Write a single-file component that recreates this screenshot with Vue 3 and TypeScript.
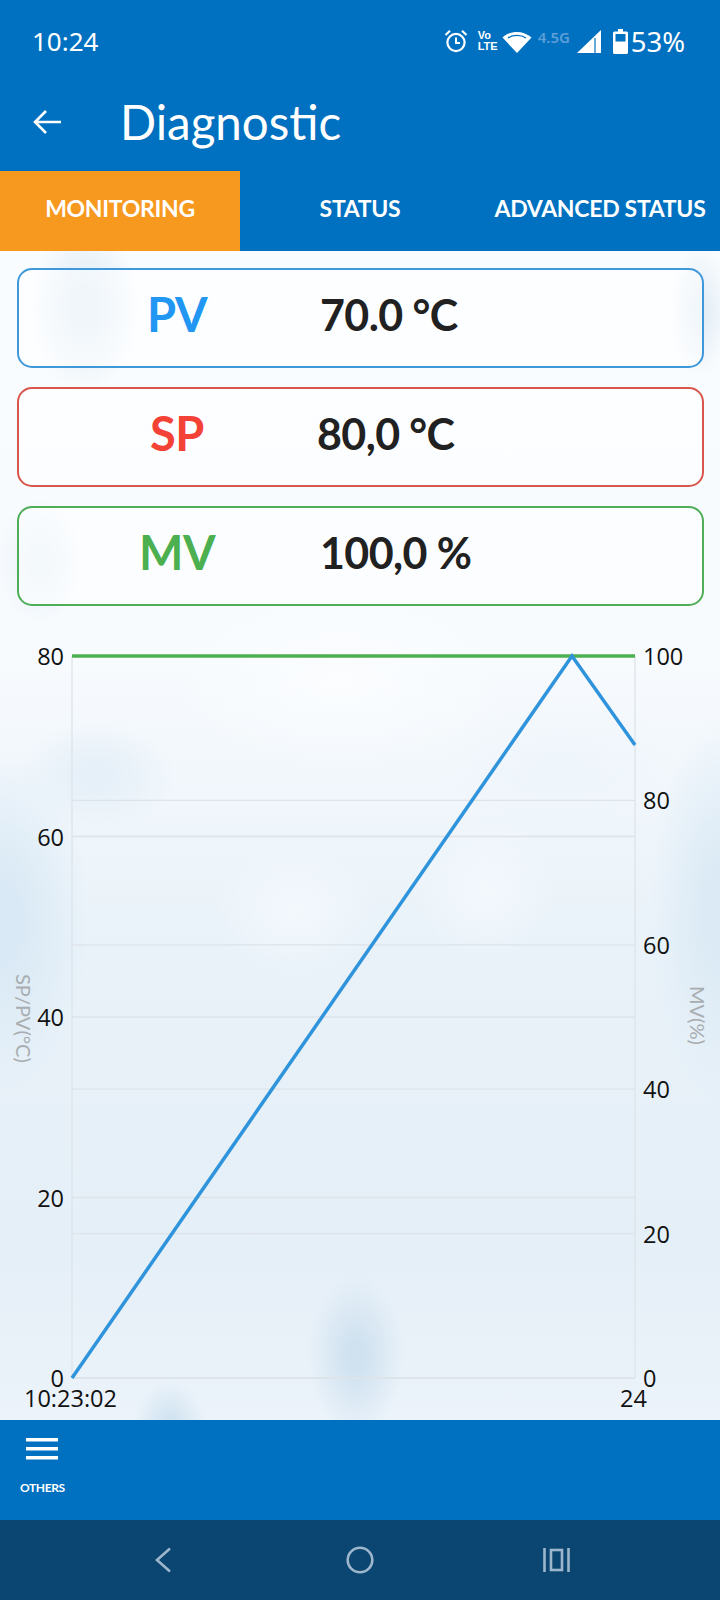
<script setup lang="ts">
interface Reading {
  key: string;
  value: string;
  tone: string;
  gap: number;
}

const readings: Reading[] = [
  { key: "PV", value: "70.0 °C", tone: "pv", gap: 2 },
  { key: "SP", value: "80,0 °C", tone: "sp", gap: -1 },
  { key: "MV", value: "100,0 %", tone: "mv", gap: 2 },
];

const tabs = ["MONITORING", "STATUS", "ADVANCED STATUS"];

const chartTop = 656;
const chartBottom = 1378;
const chartLeft = 72;
const chartRight = 635;
const span = chartBottom - chartTop;

const leftTicks = [80, 60, 40, 20, 0].map((v) => ({ v, y: chartBottom - (v / 80) * span }));
const rightTicks = [100, 80, 60, 40, 20, 0].map((v) => ({ v, y: chartBottom - (v / 100) * span }));
</script>

<template>
  <div class="screen">
    <header class="statusbar">
      <span class="clock">10:24</span>
      <div class="status-icons">
        <svg class="alarm" width="24" height="24" viewBox="0 0 24 24" fill="none" stroke="#fff" stroke-width="2.2">
          <circle cx="12" cy="13.5" r="8.6" />
          <path d="M12 8.5v5.5h4" stroke-width="2" />
          <path d="M1.5 6 6 1.8M22.5 6 18 1.8" />
        </svg>
        <span class="volte"><span>Vo</span><span>LTE</span></span>
        <svg class="wifi" width="30" height="23" viewBox="0 0 30 23">
          <path d="M15 23 0.5 7.5C8.5 0 21.500 0 29.500 7.500Z" fill="#fff" />
          <path d="M6 8C11 4.500 19 4.500 24 8" fill="none" stroke="#0070c0" stroke-width="1.400" />
        </svg>
        <span class="net">4.5G</span>
        <svg class="signal" width="24" height="23" viewBox="0 0 24 23">
          <path d="M0 23 24 0v23Z" fill="#fff" />
          <path d="M18 8v15" stroke="#0070c0" stroke-width="1.200" />
        </svg>
        <svg class="battery" width="15" height="25" viewBox="0 0 15 25">
          <path d="M5 0h5v2.500h3.500a1.500 1.500 0 0 1 1.500 1.500v19.500a1.500 1.500 0 0 1-1.500 1.500h-12A1.500 1.500 0 0 1 0 23.500V4a1.500 1.500 0 0 1 1.500-1.500H5Z" fill="#fff" />
          <rect x="2.500" y="5" width="10" height="7.500" fill="#0070c0" />
        </svg>
        <span class="percent">53%</span>
      </div>
    </header>

    <div class="toolbar">
      <svg class="back" width="28" height="28" viewBox="0 0 28 28" fill="none" stroke="#fff" stroke-width="2.600">
        <path d="M28 14H2M13 3 2 14l11 11" />
      </svg>
      <h1 class="title">Diagnostic</h1>
    </div>

    <nav class="tabs">
      <button v-for="(tab, i) in tabs" :key="tab" class="tab" :class="{ active: i === 0 }">{{ tab }}</button>
    </nav>

    <main class="content">
      <section class="cards">
        <div v-for="r in readings" :key="r.key" class="card" :class="r.tone">
          <span class="card-key">{{ r.key }}</span>
          <span class="card-value" :style="{ marginLeft: r.gap + 'px' }">{{ r.value }}</span>
        </div>
      </section>

      <svg class="chart" width="720" height="800" viewBox="0 620 720 800">
        <g stroke="#dde3e8" stroke-width="1.300">
          <line v-for="t in leftTicks" :key="'l' + t.v" :x1="chartLeft" :x2="chartRight" :y1="t.y" :y2="t.y" />
          <line v-for="t in rightTicks" :key="'r' + t.v" :x1="chartLeft" :x2="chartRight" :y1="t.y" :y2="t.y" />
          <line :x1="chartLeft" :x2="chartLeft" :y1="chartTop" :y2="chartBottom" />
          <line :x1="chartRight" :x2="chartRight" :y1="chartTop" :y2="chartBottom" />
        </g>
        <line :x1="chartLeft" :x2="chartRight" :y1="chartTop" :y2="chartTop" stroke="#4caf50" stroke-width="3.500" />
        <polyline :points="`${chartLeft},${chartBottom} 572,${chartTop} ${chartRight},745`" fill="none" stroke="#2f94dc" stroke-width="3.500" />
        <g class="tick">
          <text v-for="t in leftTicks" :key="t.v" x="64" :y="t.y + 9" text-anchor="end">{{ t.v }}</text>
          <text v-for="t in rightTicks" :key="t.v" x="643" :y="t.y + 9">{{ t.v }}</text>
          <text x="24" y="1407">10:23:02</text>
          <text x="620" y="1407">24</text>
        </g>
        <text class="axis-title" transform="translate(16 974) rotate(90)">SP/PV(°C)</text>
        <text class="axis-title" transform="translate(690 986) rotate(90)">MV(%)</text>
      </svg>
    </main>

    <footer class="bottombar">
      <svg width="32" height="22" viewBox="0 0 32 22" fill="#fff">
        <rect y="0" width="32" height="3.500" />
        <rect y="9" width="32" height="3.500" />
        <rect y="18" width="32" height="3.500" />
      </svg>
      <span class="others">OTHERS</span>
    </footer>

    <div class="navbar">
      <svg width="18" height="26" viewBox="0 0 18 26" fill="none" stroke="#9db6cb" stroke-width="2.600">
        <path d="M16 1.500 3 13l13 11.500" />
      </svg>
      <svg class="nav-home" width="28" height="28" viewBox="0 0 28 28" fill="none" stroke="#9db6cb" stroke-width="2.600">
        <circle cx="14" cy="14" r="12.300" />
      </svg>
      <svg class="nav-recent" width="27" height="24" viewBox="0 0 27 24" fill="none" stroke="#9db6cb" stroke-width="2.600">
        <path d="M1.500 0v24M25.500 0v24" />
        <rect x="8" y="2" width="11" height="20" />
      </svg>
    </div>
  </div>
</template>

<style scoped>
.screen {
  width: 720px;
  height: 1600px;
  display: flex;
  flex-direction: column;
  overflow: hidden;
  font-family: Lato, "Open Sans", sans-serif;
  color: #212121;
}

.statusbar {
  height: 62px;
  padding: 0 35px 0 32px;
  margin-top: 10px;
  display: flex;
  align-items: center;
  justify-content: space-between;
  color: #fff;
}

.clock {
  font-family: "Noto Sans", sans-serif;
  font-size: 26px;
}

.status-icons {
  display: flex;
  align-items: center;
}

.volte {
  display: flex;
  flex-direction: column;
  margin-left: 10px;
  font-family: "Liberation Sans", sans-serif;
  font-size: 11px;
  font-weight: 700;
  line-height: 11px;
}

.wifi {
  margin-left: 4px;
}

.net {
  margin: -9px 0 0 6px;
  width: 39px;
  font-family: "Noto Sans", sans-serif;
  font-size: 15px;
  font-weight: 600;
  color: #5d9fd8;
}

.battery {
  margin-left: 12px;
}

.percent {
  margin-left: 3px;
  font-family: "Noto Sans", sans-serif;
  font-size: 27.5px;
}

.toolbar {
  height: 99px;
  display: flex;
  align-items: center;
  padding-left: 33px;
  color: #fff;
}

.title {
  margin: 0 0 0 59px;
  font-size: 47.5px;
  font-weight: 400;
}

.tabs {
  height: 80px;
  display: flex;
}

.tab {
  width: 240px;
  padding: 0 0 6px;
  border: none;
  background: none;
  color: #fff;
  font-family: inherit;
  font-size: 23px;
  font-weight: 700;
  letter-spacing: -0.3px;
}

.tab.active {
  background: #f7981f;
}

.content {
  height: 1169px;
  position: relative;
  background:
    radial-gradient(48px 80px at 356px 1105px, #d0e2f0 20%, transparent),
    radial-gradient(36px 45px at 170px 1175px, #d2e4f1 20%, transparent),
    radial-gradient(55px 85px at 85px 55px, #e2edf6 25%, transparent),
    radial-gradient(30px 65px at 700px 60px, #e4eef6 20%, transparent),
    radial-gradient(45px 65px at 40px 310px, #e9f2f9 20%, transparent),
    radial-gradient(80px 55px at 95px 525px, #e6f0f8 20%, transparent),
    radial-gradient(90px 170px at 0 670px, #d9e9f5 20%, transparent),
    radial-gradient(70px 190px at 720px 660px, #dbeaf5 20%, transparent),
    radial-gradient(80px 70px at 295px 660px, #f3f8fd, transparent),
    radial-gradient(70px 70px at 485px 640px, #f3f8fd, transparent),
    radial-gradient(170px 90px at 340px 430px, #fbfdff, transparent),
    radial-gradient(120px 70px at 560px 520px, #eef5fb, transparent),
    linear-gradient(#f9fcfe 0, #f8fbfe 390px, #e9f2f9 700px, #e5eff7 1000px, #ecf3fa 1169px);
}

.cards {
  padding: 17px 16px 0 17px;
  display: flex;
  flex-direction: column;
  gap: 19px;
}

.card {
  height: 100px;
  box-sizing: border-box;
  border: 2px solid;
  border-radius: 15px;
  display: flex;
  align-items: center;
  padding: 0 0 8px 17px;
  background: rgba(255, 255, 255, 0.5);
}

.card-key {
  width: 282px;
  text-align: center;
  font-size: 47px;
  font-weight: 700;
  letter-spacing: -0.5px;
}

.card-value {
  font-size: 43px;
  font-weight: 700;
  letter-spacing: -0.6px;
}

.pv { border-color: #3f98da; }
.pv .card-key { color: #2196f3; }
.sp { border-color: #d9564c; }
.sp .card-key { color: #f44336; }
.mv { border-color: #4fae57; }
.mv .card-key { color: #4caf50; }

.chart {
  position: absolute;
  left: 0;
  top: 369px;
}

.tick {
  font-family: "Open Sans", sans-serif;
  font-size: 23.5px;
  fill: #111;
}

.axis-title {
  font-size: 20px;
  fill: #a9adb0;
}

.bottombar {
  height: 100px;
  box-sizing: border-box;
  display: flex;
  flex-direction: column;
  align-items: flex-start;
  padding: 18px 0 0 26px;
  background: #0070c0;
  color: #fff;
}

.others {
  margin: 20px 0 0 -6px;
  font-size: 12px;
  font-weight: 700;
  letter-spacing: -0.4px;
}

.navbar {
  height: 80px;
  padding-left: 154px;
  display: flex;
  align-items: center;
  background: #0b4673;
}

.nav-home {
  margin-left: 174px;
}

.nav-recent {
  margin-left: 169px;
}
</style>

<style>
html,
body {
  background: #0070c0;
}
</style>
